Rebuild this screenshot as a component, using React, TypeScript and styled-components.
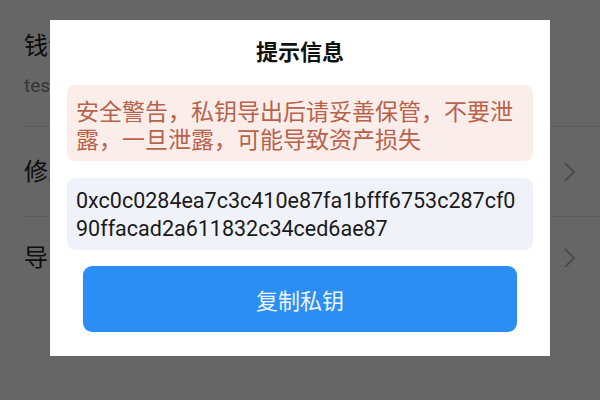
import React from 'react';
import styled, { createGlobalStyle } from 'styled-components';

const GlobalStyle = createGlobalStyle`
  html, body {
    margin: 0;
    padding: 0;
    width: 600px;
    height: 400px;
    overflow: hidden;
    background: #ffffff;
    font-family: Roboto, "Noto Sans CJK SC", "Noto Sans", sans-serif;
  }
`;

// ============================================================================
// Background page
// ============================================================================

const Page = styled.div`
  position: relative;
  width: 600px;
  height: 400px;
  background: #ffffff;
  padding-top: 31px;
  box-sizing: border-box;
`;

const Row = styled.div<{ $height: number; $last?: boolean }>`
  display: flex;
  align-items: center;
  justify-content: space-between;
  margin-left: 24px;
  padding-right: 22px;
  height: ${p => p.$height}px;
  border-bottom: ${p => (p.$last ? 'none' : '1px solid #e6e6e6')};
  box-sizing: border-box;
`;

const FieldBlock = styled.div`
  display: flex;
  flex-direction: column;
  gap: 14px;
  align-self: flex-start;
`;

const RowLabel = styled.div`
  font-size: 24px;
  color: #222222;
  line-height: 30px;
`;

const RowValue = styled.div`
  font-size: 19px;
  color: #888888;
  line-height: 22px;
`;

const Chevron = styled.svg`
  width: 16px;
  height: 22px;
`;

const Overlay = styled.div`
  position: absolute;
  inset: 0;
  background: rgba(0, 0, 0, 0.6);
  display: flex;
  justify-content: center;
  padding-top: 20px;
  box-sizing: border-box;
`;

// ============================================================================
// Dialog
// ============================================================================

const Dialog = styled.div`
  width: 500px;
  height: 336px;
  background: #ffffff;
  box-sizing: border-box;
  padding: 20px 17px 0;
  display: flex;
  flex-direction: column;
`;

const Title = styled.div`
  text-align: center;
  font-size: 22px;
  font-weight: 700;
  color: #111111;
  line-height: 26px;
  margin-bottom: 19px;
`;

const Notice = styled.div<{ $tone: 'warn' | 'key' }>`
  background: ${p => (p.$tone === 'warn' ? '#fbeeea' : '#f0f2f9')};
  color: ${p => (p.$tone === 'warn' ? '#b8614b' : '#1a1a1a')};
  border-radius: 8px;
  padding: ${p => (p.$tone === 'warn' ? '14px 9px 6px' : '9px 9px 7px')};
  font-size: ${p => (p.$tone === 'warn' ? '23px' : '21.5px')};
  line-height: 28px;
  word-break: break-all;
  margin-bottom: ${p => (p.$tone === 'warn' ? '17px' : '16px')};
`;

const KeyLine = styled.div`
  white-space: nowrap;
`;

const CopyButton = styled.button`
  margin: 0 16px;
  height: 66px;
  border: none;
  border-radius: 9px;
  background: #2a8ef5;
  color: #eef5ff;
  font-family: Roboto, "Noto Sans CJK SC", sans-serif;
  font-size: 22px;
  cursor: pointer;
`;

const ChevronIcon = () => (
  <Chevron viewBox="0 0 16 22">
    <path d="M3 2 L12 11 L3 20" fill="none" stroke="#bbbbbb" strokeWidth="2" />
  </Chevron>
);

const privateKey = '0xc0c0284ea7c3c410e87fa1bfff6753c287cf090ffacad2a611832c34ced6ae87';

export default function App() {
  return (
    <>
      <GlobalStyle />
      <Page>
        <Row $height={96}>
          <FieldBlock>
            <RowLabel>钱包名称</RowLabel>
            <RowValue>test</RowValue>
          </FieldBlock>
        </Row>
        <Row $height={90}>
          <RowLabel>修改密码</RowLabel>
          <ChevronIcon />
        </Row>
        <Row $height={82} $last>
          <RowLabel>导出私钥</RowLabel>
          <ChevronIcon />
        </Row>
        <Overlay>
          <Dialog>
            <Title>提示信息</Title>
            <Notice $tone="warn">
              安全警告，私钥导出后请妥善保管，不要泄露，一旦泄露，可能导致资产损失
            </Notice>
            <Notice $tone="key">
              <KeyLine>{privateKey.slice(0, 39)}</KeyLine>
              <KeyLine>{privateKey.slice(39)}</KeyLine>
            </Notice>
            <CopyButton>复制私钥</CopyButton>
          </Dialog>
        </Overlay>
      </Page>
    </>
  );
}
